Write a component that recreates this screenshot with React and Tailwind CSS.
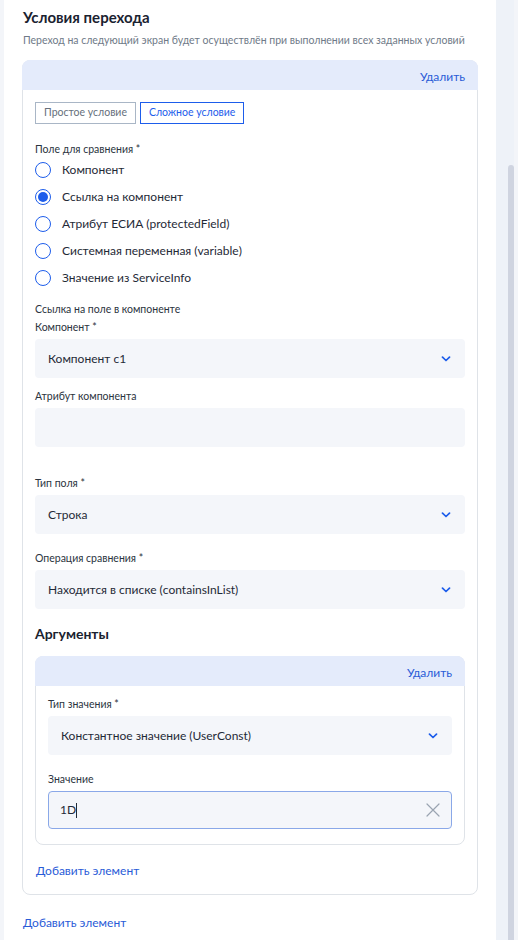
import React from "react";

const font = { fontFamily: "Lato, 'Noto Sans', sans-serif" };

function Chevron() {
  return (
    <svg width="10" height="6" viewBox="0 0 10 6" className="shrink-0">
      <path d="M1.5 1.2l3.5 3.3l3.5-3.3" fill="none" stroke="#1d5deb" strokeWidth="1.7" strokeLinecap="round" strokeLinejoin="round" />
    </svg>
  );
}

function Label({ children, className = "" }) {
  return <div className={"text-[10.5px] leading-[14px] pt-[1px] text-[#2b3440] " + className}>{children}</div>;
}

function Select({ value, className = "" }) {
  return (
    <div className={"h-[39px] rounded-[4px] bg-[#f4f6fa] flex items-center justify-between pl-[13px] pr-[14px] " + className}>
      <span className="text-[12px] text-[#1f2a37]">{value}</span>
      <Chevron />
    </div>
  );
}

function Radio({ checked, label }) {
  return (
    <div className="h-[27px] flex items-center">
      <div className="w-[16px] h-[16px] rounded-full border-[1.5px] border-[#1d5deb] flex items-center justify-center">
        {checked && <div className="w-[10px] h-[10px] rounded-full bg-[#1d5deb]" />}
      </div>
      <span className="ml-[11px] text-[12px] text-[#1f2a37]">{label}</span>
    </div>
  );
}

function CardHeader() {
  return (
    <div className="h-[30px] bg-[#e4ebfb] rounded-t-[8px] flex items-center justify-end pr-[12px] -mx-px -mt-px border-t border-x border-[#e4ebfb]">
      <span className="text-[12px] text-[#2a5bd7] mt-[2px]">Удалить</span>
    </div>
  );
}

export default function App() {
  return (
    <div style={font} className="w-[518px] h-[940px] flex overflow-hidden bg-white">
      <div className="w-[4px] bg-[#f3f5f9]" />
      <div className="flex-1 bg-white pl-[18px] pr-[18px] pt-[6px]">
        <div className="pl-[1px] text-[15px] leading-[22px] font-bold text-[#1a2230]">Условия перехода</div>
        <div className="pl-[1px] mt-[5px] text-[10.5px] leading-[14px] text-[#6f7a88] whitespace-nowrap">
          Переход на следующий экран будет осуществлён при выполнении всех заданных условий
        </div>

        <div className="mt-[13px] border border-[#dfe3e8] rounded-[8px]">
          <CardHeader />
          <div className="px-[12px] pt-[12px] pb-[15px]">
            <div className="flex gap-[4px]">
              <div className="h-[22px] px-[8px] border border-[#a9b6c6] flex items-center text-[10.5px] text-[#66707c]">Простое условие</div>
              <div className="h-[22px] px-[8px] border border-[#1d5deb] flex items-center text-[10.5px] text-[#1d5deb]">Сложное условие</div>
            </div>

            <Label className="mt-[17px]">Поле для сравнения *</Label>
            <div>
              <Radio label="Компонент" />
              <Radio checked label="Ссылка на компонент" />
              <Radio label="Атрибут ЕСИА (protectedField)" />
              <Radio label="Системная переменная (variable)" />
              <Radio label="Значение из ServiceInfo" />
            </div>

            <Label className="mt-[10px]">Ссылка на поле в компоненте</Label>
            <Label className="mt-[3px]">Компонент *</Label>
            <Select value="Компонент с1" className="mt-[5px]" />

            <Label className="mt-[10px]">Атрибут компонента</Label>
            <div className="mt-[5px] h-[39px] rounded-[4px] bg-[#f4f6fa]" />

            <Label className="mt-[28px]">Тип поля *</Label>
            <Select value="Строка" className="mt-[5px]" />

            <Label className="mt-[16px]">Операция сравнения *</Label>
            <Select value="Находится в списке (containsInList)" className="mt-[5px]" />

            <div className="mt-[15px] text-[14px] leading-[20px] font-bold text-[#1a2230]">Аргументы</div>

            <div className="mt-[12px] border border-[#dfe3e8] rounded-[8px]">
              <CardHeader />
              <div className="px-[12px] pt-[10px] pb-[15px]">
                <Label>Тип значения *</Label>
                <Select value="Константное значение (UserConst)" className="mt-[5px]" />
                <Label className="mt-[16px]">Значение</Label>
                <div className="mt-[5px] h-[38px] rounded-[4px] bg-[#f4f6fa] border border-[#8aa8e8] flex items-center justify-between pl-[11px] pr-[10px]">
                  <span className="text-[12px] text-[#1f2a37] flex items-center">
                    1D<span className="inline-block w-px h-[15px] bg-[#1f2a37]" />
                  </span>
                  <svg width="16" height="16" viewBox="0 0 16 16">
                    <path d="M2 2l12 12M14 2L2 14" stroke="#9aa4b1" strokeWidth="1.2" strokeLinecap="round" />
                  </svg>
                </div>
              </div>
            </div>

            <div className="mt-[18px] text-[12px] leading-[16px] text-[#2a5bd7] pl-[1px]">Добавить элемент</div>
          </div>
        </div>

        <div className="mt-[20px] text-[12px] leading-[16px] text-[#2a5bd7] pl-[1px]">Добавить элемент</div>
      </div>
      <div className="w-[22px] bg-[#eef2f8] flex">
        <div className="w-[12px]" />
        <div className="w-[6px] mt-[165px] rounded-t-full bg-[#cfd4e0]" />
        <div className="w-[4px] bg-[#f3f5f9]" />
      </div>
    </div>
  );
}
